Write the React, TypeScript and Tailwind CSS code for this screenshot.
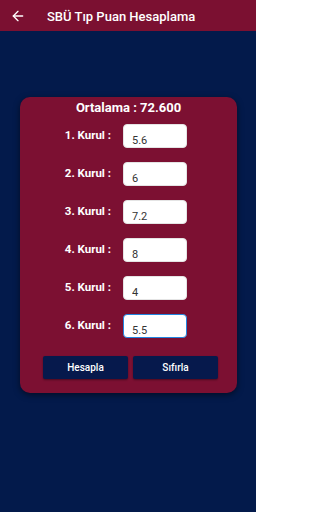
import { ArrowLeft } from "lucide-react";

const kurullar = [
  { label: "1. Kurul :", value: "5.6" },
  { label: "2. Kurul :", value: "6" },
  { label: "3. Kurul :", value: "7.2" },
  { label: "4. Kurul :", value: "8" },
  { label: "5. Kurul :", value: "4" },
  { label: "6. Kurul :", value: "5.5", focused: true },
];

export default function App() {
  return (
    <div className="w-[256px] h-[512px] bg-[#031a4b] flex flex-col font-['Roboto',sans-serif]">
      {/* App bar */}
      <header className="h-[31px] bg-[#7b1031] flex items-center shrink-0">
        <ArrowLeft size={16} strokeWidth={2} className="text-white ml-[10px]" />
        <span className="ml-[21px] mt-[1px] text-white text-[13px] font-medium leading-none">
          SBÜ Tıp Puan Hesaplama
        </span>
      </header>

      {/* Card */}
      <div className="mt-[66px] ml-[20px] mr-[19px] h-[296px] bg-[#7c1032] rounded-[10px] shadow-[0_2px_6px_rgba(0,0,0,0.5)] flex flex-col">
        <div className="pt-[3px] text-center text-white text-[13px] font-bold leading-[16px]">
          Ortalama : 72.600
        </div>

        <div className="mt-[8px] flex flex-col gap-[14px]">
          {kurullar.map((k) => (
            <div key={k.label} className="flex items-center h-[24px]">
              <span className="w-[91px] text-right text-white text-[11.5px] font-bold leading-none">
                {k.label}
              </span>
              <input
                defaultValue={k.value}
                className={`ml-[12px] w-[64px] h-[24px] bg-white rounded-[4px] pl-[8px] pt-[8px] text-[11px] leading-[14px] text-[#333] outline-none ${
                  k.focused ? "border-[1.5px] border-[#2185e0]" : "border border-[#e4e4e4]"
                }`}
              />
            </div>
          ))}
        </div>

        <div className="mt-[18px] pl-[23px] flex gap-[5px]">
          <button className="w-[85px] h-[23px] bg-[#06194c] rounded-[2px] text-white text-[10px] font-medium shadow-[0_1px_2px_rgba(0,0,0,0.4)]">
            Hesapla
          </button>
          <button className="w-[85px] h-[23px] bg-[#06194c] rounded-[2px] text-white text-[10px] font-medium shadow-[0_1px_2px_rgba(0,0,0,0.4)]">
            Sıfırla
          </button>
        </div>
      </div>
    </div>
  );
}
